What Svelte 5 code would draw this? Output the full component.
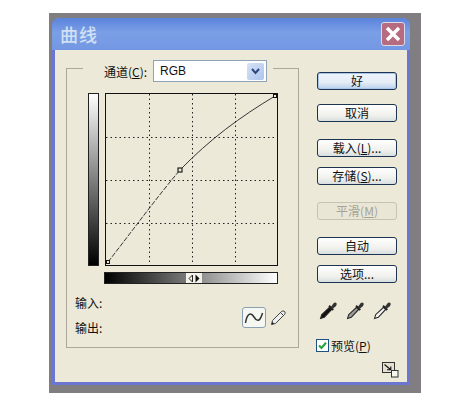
<script>
    const buttons = [
        { label: '好', cls: 'default' },
        { label: '取消', cls: 'gap-cancel' },
        { label: '载入(', key: 'L', rest: ')...', cls: 'gap-load' },
        { label: '存储(', key: 'S', rest: ')...', cls: 'gap-save' },
        { label: '平滑(', key: 'M', rest: ')', cls: 'gap-smooth', disabled: true },
        { label: '自动', cls: 'gap-auto' },
        { label: '选项...', cls: 'gap-options' }
    ];
    const grid = [43, 86, 129];
    const droppers = ['#111', '#999', '#f2f2f2'];
</script>

<div class="backdrop">
    <div class="window">
        <div class="titlebar">
            <span class="title">曲线</span>
            <button class="close" aria-label="关闭">
                <svg width="16" height="16" viewBox="0 0 16 16">
                    <path d="M2 2 L14 14 M14 2 L2 14" stroke="#fff" stroke-width="3.4" />
                </svg>
            </button>
        </div>
        <div class="body">
            <div class="group">
                <div class="legend">
                    <span class="channel">通道(<u>C</u>):</span>
                    <div class="select">
                        <span>RGB</span>
                        <div class="arrow">
                            <svg width="9" height="7" viewBox="0 0 9 7">
                                <path d="M1 1 L4.5 5 L8 1" fill="none" stroke="#2c4a80" stroke-width="2" />
                            </svg>
                        </div>
                    </div>
                </div>
                <div class="curve-row">
                    <div class="vbar"></div>
                    <div class="curve-col">
                        <svg class="graph" width="173" height="173" viewBox="0 0 173 173">
                            {#each grid as g}
                                <line x1={g + 1.5} y1="1" x2={g + 1.5} y2="172" stroke="#222" stroke-dasharray="1.5 3" />
                                <line x1="1" y1={g + 1.5} x2="172" y2={g + 1.5} stroke="#222" stroke-dasharray="1.5 3" />
                            {/each}
                            <path d="M3 169 C28 137 52 104 75 77" fill="none" stroke="#222" stroke-width="0.9" stroke-dasharray="5 1.5" />
                            <path d="M75 77 C105 46 135 24 170 3" fill="none" stroke="#222" stroke-width="0.9" />
                            <rect x="0.5" y="0.5" width="172" height="172" fill="none" stroke="#111" />
                            <rect x="1.5" y="167.5" width="3" height="3" fill="#ece9d8" stroke="#111" />
                            <rect x="168.5" y="1.5" width="3" height="3" fill="#ece9d8" stroke="#111" />
                            <rect x="73" y="75" width="4" height="4" fill="#ece9d8" stroke="#111" stroke-width="1.1" />
                        </svg>
                        <div class="hbar">
                            <div class="handle">
                                <svg width="16" height="11" viewBox="0 0 16 11">
                                    <path d="M6.5 2 L3 5.5 L6.5 9 Z" fill="none" stroke="#222" />
                                    <path d="M9.5 1.5 L13.5 5.5 L9.5 9.5 Z" fill="#111" />
                                </svg>
                            </div>
                        </div>
                    </div>
                </div>
                <div class="io-row">
                    <div class="labels">
                        <span>输入:</span>
                        <span>输出:</span>
                    </div>
                    <div class="tools">
                        <div class="tool-curve">
                            <svg width="20" height="16" viewBox="0 0 20 16">
                                <path d="M1.5 13 C3 3 7 2 10 7 C13 12 16 12 18.5 3" fill="none" stroke="#333" stroke-width="1.5" />
                            </svg>
                        </div>
                        <svg width="17" height="17" viewBox="0 0 17 17">
                            <path d="M2.5 11.5 L11.5 2.5 Q13 1.2 14.8 2.6 Q15.8 4 14.5 5.5 L5.5 14.5 L1.5 15.5 Z" fill="#eee" stroke="#444" />
                            <path d="M10.5 3.5 L13.5 6.5" stroke="#444" />
                            <path d="M1.5 15.5 L2.3 12.8 L4.2 14.7 Z" fill="#222" />
                        </svg>
                    </div>
                </div>
            </div>
            <div class="side">
                {#each buttons as b}
                    <button class="btn {b.cls}" disabled={b.disabled}>
                        {b.label}{#if b.key}<u>{b.key}</u>{b.rest}{/if}
                    </button>
                {/each}
                <div class="droppers">
                    {#each droppers as fill}
                        <svg width="19" height="19" viewBox="0 0 18 18">
                            <path d="M1.5 16.5 L2.5 13 L10 6 L12 8 L5 15.5 Z" fill={fill} stroke="#222" stroke-width="1" />
                            <path d="M9.5 4.5 L13.5 8.5" stroke="#222" stroke-width="1.8" />
                            <path d="M11 6 L14 2 Q15.5 1 16.5 2 Q17.3 3.5 16 5 L12.5 7.5 Z" fill="#333" />
                        </svg>
                    {/each}
                </div>
                <div class="preview">
                    <span class="check">
                        <svg width="11" height="11" viewBox="0 0 11 11">
                            <path d="M2 5.5 L4.5 8 L9 2.8" fill="none" stroke="#2aa53a" stroke-width="2.2" />
                        </svg>
                    </span>
                    <span>预览(<u>P</u>)</span>
                </div>
                <svg class="resize" width="17" height="16" viewBox="0 0 17 16">
                    <rect x="0.5" y="0.5" width="12" height="10" fill="#e4e1d2" stroke="#333" />
                    <path d="M2.5 2.5 L8.5 7.5 M8.8 4.5 V7.8 H5" fill="none" stroke="#111" stroke-width="1.1" />
                    <rect x="9.5" y="8.5" width="6.5" height="6.5" fill="#f6f5ee" stroke="#333" />
                </svg>
            </div>
        </div>
    </div>
</div>

<style>
    :global(body) {
        background: #fff;
        font-family: "Noto Sans CJK SC", "Liberation Sans", sans-serif;
    }

    .backdrop {
        box-sizing: border-box;
        width: 372px;
        height: 380px;
        margin: 13px 0 0 49px;
        padding: 5px 11px 8px 3px;
        background: #807e80;
    }

    .window {
        box-sizing: border-box;
        height: 100%;
        display: flex;
        flex-direction: column;
        background: #ece9d8;
        border: 3px solid #6a76d2;
        border-top: none;
        border-radius: 7px 7px 0 0;
    }

    .titlebar {
        height: 32px;
        flex: none;
        margin: 0 -3px;
        padding: 0 5px 0 8px;
        display: flex;
        align-items: center;
        justify-content: space-between;
        background: linear-gradient(180deg, #5a83dc 0%, #7b9fe6 45%, #7397e2 100%);
        border-radius: 7px 7px 0 0;
    }

    .title {
        font-size: 18px;
        font-weight: 500;
        color: #d3e0f4;
        letter-spacing: 1px;
    }

    .close {
        width: 24px;
        height: 24px;
        padding: 0;
        display: flex;
        align-items: center;
        justify-content: center;
        background: #b66b80;
        border: 1px solid #d9dbea;
        border-radius: 3px;
    }

    .body {
        flex: 1;
        display: flex;
        align-items: flex-start;
        padding: 18px 0 0 11px;
    }

    .group {
        box-sizing: border-box;
        width: 233px;
        height: 280px;
        border: 1px solid #aca899;
        font-size: 12px;
        color: #111;
    }

    .legend {
        box-sizing: border-box;
        width: 190px;
        height: 22px;
        margin: -9px 0 0 16px;
        padding: 0 6px 0 21px;
        display: flex;
        align-items: center;
        gap: 2px;
        background: #ece9d8;
    }

    .channel {
        white-space: nowrap;
        width: 47px;
        flex: none;
        font-size: 12px;
    }

    .select {
        box-sizing: border-box;
        flex: 1;
        height: 22px;
        padding: 0 2px 0 6px;
        display: flex;
        align-items: center;
        justify-content: space-between;
        background: #fff;
        border: 1px solid #8ea2b8;
        font-family: "Liberation Sans", sans-serif;
        font-size: 12px;
    }

    .arrow {
        width: 17px;
        height: 17px;
        display: flex;
        align-items: center;
        justify-content: center;
        background: linear-gradient(135deg, #d5e2f7, #aec4ec);
        border-radius: 2px;
    }

    .curve-row {
        display: flex;
        gap: 6px;
        margin: 11px 0 0 21px;
    }

    .vbar {
        box-sizing: border-box;
        width: 11px;
        height: 173px;
        background: linear-gradient(180deg, #fff, #000);
        border: 1px solid #222;
    }

    .curve-col {
        display: flex;
        flex-direction: column;
        gap: 6px;
    }

    .graph {
        display: block;
    }

    .hbar {
        box-sizing: border-box;
        width: 174px;
        height: 12px;
        display: flex;
        justify-content: center;
        margin-left: -1px;
        padding-left: 6px;
        background: linear-gradient(90deg, #000, #fff);
        border: 1px solid #222;
    }

    .handle {
        width: 16px;
        height: 10px;
        background: #f4f2e8;
        display: flex;
        align-items: center;
    }

    .io-row {
        display: flex;
        justify-content: space-between;
        margin: 8px 0 0 8px;
        padding-right: 11px;
    }

    .labels {
        display: flex;
        flex-direction: column;
        gap: 8px;
        padding-top: 2px;
        line-height: 17px;
    }

    .tools {
        display: flex;
        align-items: center;
        gap: 4px;
        margin-top: 7px;
    }

    .tool-curve {
        box-sizing: border-box;
        width: 24px;
        height: 21px;
        display: flex;
        align-items: center;
        justify-content: center;
        background: #f7f7f2;
        border: 1px solid #8aa0b5;
        border-radius: 3px;
    }

    .side {
        box-sizing: border-box;
        width: 80px;
        margin: 4px 0 0 18px;
        display: flex;
        flex-direction: column;
    }

    .btn {
        box-sizing: border-box;
        width: 80px;
        height: 18px;
        flex: none;
        padding: 0;
        background: linear-gradient(180deg, #fff 0%, #f0f1ec 65%, #d8dee0 100%);
        border: 1px solid #1c3450;
        border-radius: 3px;
        font-family: inherit;
        font-size: 12px;
        line-height: 16px;
        color: #111;
    }

    .btn.default {
        background: linear-gradient(180deg, #eef4fb 0%, #e4ecf6 60%, #b9d0ee 100%);
        box-shadow: inset 0 0 0 1px #a9c6ea;
    }

    .btn:disabled {
        background: #e9e6d6;
        border-color: #c6c3b2;
        color: #a5a395;
    }

    .gap-cancel { margin-top: 14px; }
    .gap-load { margin-top: 17px; }
    .gap-save { margin-top: 10px; }
    .gap-smooth { margin-top: 17px; }
    .gap-auto { margin-top: 17px; }
    .gap-options { margin-top: 10px; }

    .droppers {
        display: flex;
        justify-content: space-between;
        margin: 18px 5px 0 2px;
    }

    .preview {
        display: flex;
        align-items: center;
        gap: 2px;
        margin: 17px 0 0 -1px;
        font-size: 12px;
        color: #111;
        white-space: nowrap;
    }

    .check {
        box-sizing: border-box;
        width: 13px;
        height: 13px;
        display: flex;
        align-items: center;
        justify-content: center;
        background: #fff;
        border: 1px solid #1c5180;
    }

    .resize {
        align-self: flex-end;
        margin: 8px -2px 0 0;
    }
</style>
